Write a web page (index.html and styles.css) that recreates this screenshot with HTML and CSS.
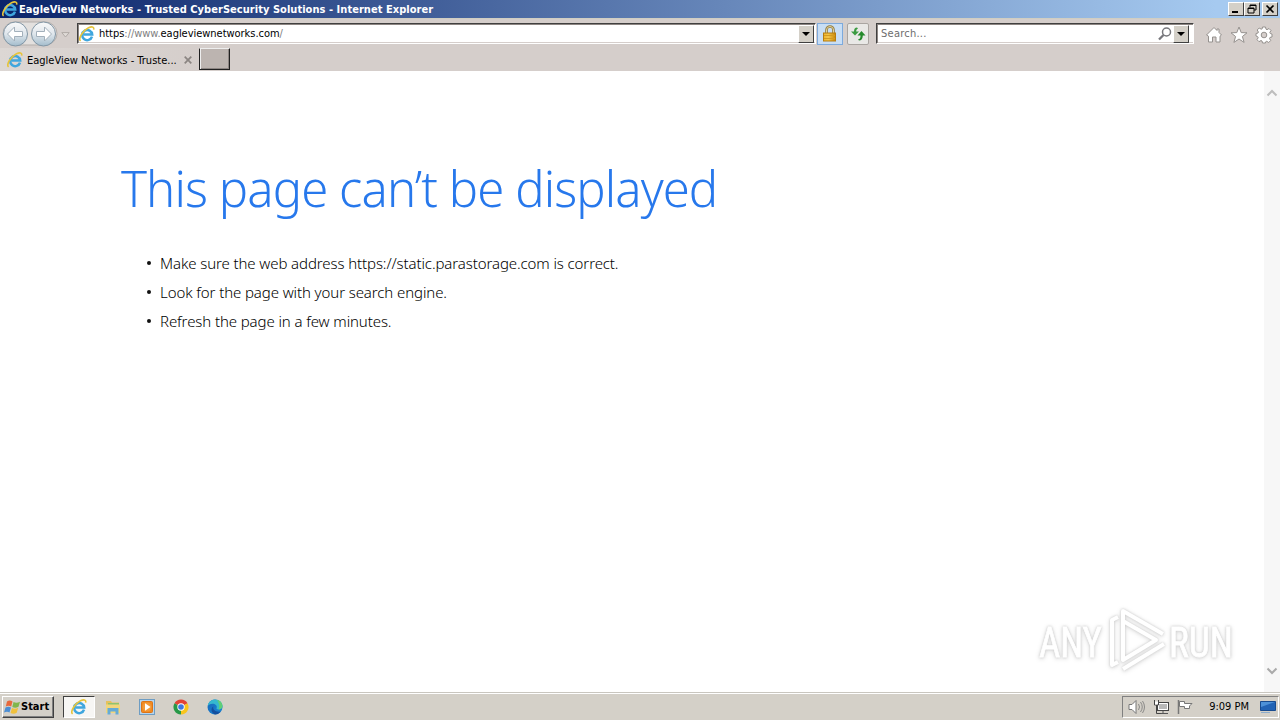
FILE: index.html
```
<!DOCTYPE html>
<html lang="en">
<head>
  <meta charset="UTF-8">
  <title>EagleView Networks - Trusted CyberSecurity Solutions</title>
  <link rel="stylesheet" href="styles.css">
</head>
<body>
  <svg width="0" height="0" class="defs">
    <defs>
      <linearGradient id="ring" x1="0" y1="0" x2="0" y2="1">
        <stop offset="0" stop-color="#fafafa"/>
        <stop offset="0.5" stop-color="#dfe6ec"/>
        <stop offset="1" stop-color="#a3bccc"/>
      </linearGradient>
      <linearGradient id="gold" x1="0" y1="0" x2="1" y2="0">
        <stop offset="0" stop-color="#efb52c"/>
        <stop offset="0.4" stop-color="#f4c64a"/>
        <stop offset="1" stop-color="#c98808"/>
      </linearGradient>
      <linearGradient id="edge" x1="0" y1="0" x2="1" y2="1">
        <stop offset="0" stop-color="#1565b8"/>
        <stop offset="1" stop-color="#1b87d6"/>
      </linearGradient>
      <symbol id="ie" viewBox="0 0 16 16">
        <path d="M13 10.6A5 5 0 1 1 13.2 8.6H4.6" fill="none" stroke="#3fa6de" stroke-width="2.5"/>
        <path d="M1.6 14.8C-1.2 12.6 4 4.5 9.5 1.8C12.4.3 15.4.4 14.6 3.6" fill="none" stroke="#e6c43c" stroke-width="1.6"/>
      </symbol>
    </defs>
  </svg>

  <div class="titlebar">
    <svg class="title-icon" width="16" height="16"><use href="#ie"/></svg>
    <span class="title">EagleView Networks - Trusted CyberSecurity Solutions - Internet Explorer</span>
    <div class="window-buttons">
      <svg class="win-btn" viewBox="0 0 14 12"><path d="M3 9h6" stroke="#000" stroke-width="2"/></svg>
      <svg class="win-btn" viewBox="0 0 14 12"><path d="M5 4.5V2h6v5H9M5 2.5h6M3 5h6v5H3zM3 5.5h6" fill="none" stroke="#000"/></svg>
      <svg class="win-btn close" viewBox="0 0 14 12"><path d="M3.5 2.5l7 7M10.5 2.5l-7 7" stroke="#000" stroke-width="1.7"/></svg>
    </div>
  </div>

  <div class="navbar">
    <svg class="arrows" width="58" height="28" viewBox="0 0 58 28">
      <rect x="3" y="2" width="54" height="23" rx="11.5" fill="#e3e0de" stroke="#b3aeab"/>
      <circle cx="15.5" cy="14" r="12" fill="url(#ring)" stroke="#8296a5"/>
      <circle cx="43.5" cy="14" r="12" fill="url(#ring)" stroke="#8296a5"/>
      <path d="M7.500 14l7-7v4.500h8v5h-8V21zM51.500 14l-7-7v4.500h-8v5h8V21z" fill="#fff" stroke="#a3b0bb"/>
    </svg>
    <svg class="history" width="9" height="6"><path d="M.8.6h7.400L4.500 5z" fill="#dfdbd7" stroke="#b0aaa6"/></svg>
    <div class="field address">
      <svg width="16" height="16"><use href="#ie"/></svg>
      <span class="url"><i>https</i>://www.<i>eagleviewnetworks.com</i>/</span>
      <svg class="drop" viewBox="0 0 14 16"><path d="M3 6h8L7 10z"/></svg>
    </div>
    <div class="lock">
      <svg width="14" height="18" viewBox="0 0 14 18">
        <path d="M3.5 9V5a3.500 3.500 0 0 1 7 0v4" fill="none" stroke="#8f7a42" stroke-width="2.600"/>
        <path d="M3.5 9V5a3.500 3.500 0 0 1 7 0v4" fill="none" stroke="#e3d49c"/>
        <rect x=".5" y="8" width="12" height="8" fill="url(#gold)" stroke="#b67d10"/>
        <path d="M1 10.500h11M1 13.500h11" stroke="#d39a22"/>
      </svg>
    </div>
    <div class="refresh">
      <svg width="16" height="16" viewBox="0 0 16 16">
        <path d="M7 1.500C5 1.500 4 3 4 5.500H1L5 9.500 9 5.500H6.200C6.200 3.500 7 3 8 2.500z" fill="#3b9b41"/>
        <path d="M9 14.500C11.500 14.500 12.800 12.500 12.800 9.500H15.500L11.500 5 7.500 9.500H10.500C10.500 12 10 13 8 13.500z" fill="#258a2c"/>
      </svg>
    </div>
    <div class="field search">
      <span>Search...</span>
      <svg class="glass" width="14" height="14" viewBox="0 0 14 14"><circle cx="8.500" cy="5" r="4" fill="none" stroke="#77777c" stroke-width="1.500"/><path d="M5.500 8L1 12.500" stroke="#77777c" stroke-width="2.300"/></svg>
      <svg class="drop" viewBox="0 0 14 16"><path d="M3 6h8L7 10z"/></svg>
    </div>
    <div class="tools">
      <svg width="18" height="18" viewBox="0 0 18 18"><path d="M1.500 9L9 1.500 12 4.500V3h2v3.500L16.500 9 15 10.200V16h-4v-5H7.500v5H3.500v-5.800z" fill="#fff" stroke="#95918e"/></svg>
      <svg width="18" height="18" viewBox="0 0 18 18"><path d="M9 1l2.200 5.600 5.800.2-4.600 3.700 1.700 5.900L9 13l-5.100 3.400 1.700-5.900L1 6.800l5.800-.2z" fill="#fff" stroke="#95918e"/></svg>
      <svg width="18" height="18" viewBox="0 0 18 18">
        <path d="M7.500 1h3l.5 2.200 1 .5 2-1.200 2 2-1.200 2 .5 1L17 8v3l-2 .4-.5 1.100 1.200 2-2 2-2-1.200-1 .5L10.500 17h-3l-.5-2-1-.5-2 1.200-2-2 1.200-2-.5-1L1 10V7.500l2-.5.4-1-1.200-2 2-2 2 1.200 1-.4z" fill="#fff" stroke="#95918e"/>
        <circle cx="9" cy="9" r="2.800" fill="#d5cecb" stroke="#95918e"/>
      </svg>
    </div>
  </div>

  <div class="tabbar">
    <div class="tab">
      <svg width="16" height="16"><use href="#ie"/></svg>
      <span class="tab-title">EagleView Networks - Truste...</span>
      <svg class="tab-close" width="8" height="8" viewBox="0 0 8 8"><path d="M.7.7l6.600 6.600M7.300.7L.7 7.300" stroke="#8b8582" stroke-width="1.700"/></svg>
    </div>
    <div class="new-tab"></div>
  </div>

  <div class="viewport">
    <main class="content">
      <h1>This page can’t be displayed</h1>
      <ul>
        <li><span>Make sure the web address https://static.parastorage.com is correct.</span></li>
        <li><span>Look for the page with your search engine.</span></li>
        <li><span>Refresh the page in a few minutes.</span></li>
      </ul>
    </main>
    <div class="scrollbar">
      <svg width="12" height="8" viewBox="0 0 12 8"><path d="M1.500 6.500L6 2l4.500 4.500" fill="none" stroke="#bdbdbd" stroke-width="2"/></svg>
      <svg width="12" height="8" viewBox="0 0 12 8"><path d="M1.500 1.500L6 6l4.500-4.500" fill="none" stroke="#aaa" stroke-width="2"/></svg>
    </div>
    <svg class="watermark" width="230" height="76" viewBox="0 0 230 76">
      <g fill="#fff" stroke="#fff" stroke-width=".8">
        <text x="8" y="54" textLength="63" lengthAdjust="spacingAndGlyphs">ANY</text>
        <text x="138" y="54" textLength="64" lengthAdjust="spacingAndGlyphs">RUN</text>
      </g>
      <g fill="none" stroke="#fff" stroke-width="4" stroke-linejoin="round">
        <path d="M92 48V8l40 23"/>
        <path d="M92 18l33 19-33 20V18"/>
        <path d="M87 14l-6 3v45l6-3"/>
        <path d="M92 66l41-25"/>
      </g>
    </svg>
  </div>

  <div class="taskbar">
    <div class="start">
      <svg width="17" height="16" viewBox="0 0 17 16">
        <path d="M3 2.500C5 1 7 1.500 8.500 2.500L7.200 7.500C5.500 6.500 3.500 6.500 1.800 7.500z" fill="#e8693c"/>
        <path d="M9.500 3c2 1 4 1 6.500-.3l-1.500 5c-2 1.200-4.300 1.200-6.200.2z" fill="#80b64c"/>
        <path d="M1.500 8.500c2-1.200 4-1 5.500 0L5.500 13.500C4 12.400 2 12.400 0 13.500z" fill="#4c8ed4"/>
        <path d="M8 9c2 1 4 1 6.200-.2l-1.500 5c-2 1.200-4.200 1.200-6.200.1z" fill="#f0c13c"/>
      </svg>
      <span>Start</span>
    </div>
    <div class="task active"><svg width="16" height="16"><use href="#ie"/></svg></div>
    <div class="task">
      <svg width="16" height="16" viewBox="0 0 16 16">
        <path d="M1 2h5l1 1.500h7V13H1z" fill="#e6c15c"/>
        <path d="M3 4h11v3H3z" fill="#8fc36e"/>
        <path d="M1 5.500h14V14H1z" fill="#f2d67c"/>
        <path d="M2.500 15.500V9h11v6.500h-3v-3h-5v3z" fill="#65abd6"/>
      </svg>
    </div>
    <div class="task">
      <svg width="16" height="16" viewBox="0 0 16 16">
        <rect x=".5" y=".5" width="15" height="15" fill="#b6d5ee" stroke="#6e9dc3"/>
        <rect x="2.500" y="2.500" width="11" height="11" rx="1" fill="#f08a21" stroke="#dc7418"/>
        <circle cx="8" cy="8" r="4.500" fill="#f29a39"/>
        <path d="M6 4.200l5.500 3.800L6 11.800z" fill="#fff"/>
      </svg>
    </div>
    <div class="task">
      <svg width="16" height="16" viewBox="0 0 16 16">
        <path d="M8 8L1.500 4.250A7.500 7.500 0 0 1 14.500 4.250z" fill="#e24335"/>
        <path d="M8 8L14.500 4.250A7.500 7.500 0 0 1 8 15.500z" fill="#f8c51c"/>
        <path d="M8 8v7.500A7.500 7.500 0 0 1 1.500 4.250z" fill="#279847"/>
        <circle cx="8" cy="8" r="3.700" fill="#fff"/>
        <circle cx="8" cy="8" r="2.800" fill="#3d78e0"/>
      </svg>
    </div>
    <div class="task">
      <svg width="16" height="16" viewBox="0 0 16 16">
        <circle cx="8" cy="8" r="7.500" fill="url(#edge)"/>
        <path d="M.7 7C1.500 2.800 4.500.5 8 .5c4.500 0 7.500 3.300 7.500 6.500 0 2.300-1.700 3.500-4 3.500-1.500 0-2.500-.6-1.800-1.700C10.500 6.500 8 4.700 5.500 4.700 3.200 4.700 1.500 5.700.7 7z" fill="#35b8cf"/>
        <path d="M10 .8c3.200.8 5.500 3.400 5.500 6.200 0 2.300-1.700 3.500-4 3.500 1.500-3 .8-6-1.500-9.700z" fill="#60cf77"/>
        <path d="M6.300 7.500c-.8 3 2 5.800 7.500 5A7.500 7.500 0 0 1 8 15.500C4 14 3.500 9 6.300 7.500z" fill="#144f9e"/>
      </svg>
    </div>
    <div class="tray">
      <svg width="17" height="16" viewBox="0 0 17 16"><path d="M1 5.500h3l4-4v13l-4-4H1z" fill="#fff" stroke="#777"/><path d="M10.500 5q2 3 0 6M12.500 3q3.500 5 0 10M14.500 2q4 6 0 12" fill="none" stroke="#777" stroke-width=".8"/></svg>
      <svg width="16" height="16" viewBox="0 0 16 16"><rect x="4.500" y="3.500" width="11" height="8" fill="#b8b8b8" stroke="#444"/><path d="M5.500 4.500h9v6h-9z" fill="none" stroke="#fff"/><path d="M7 14.500h8M10 12v2" stroke="#555"/><path d="M1.500 1v5h4V1M3.500 6v8.500h4" fill="none" stroke="#444"/><path d="M2 2.500h3v3H2z" fill="#fff"/></svg>
      <svg width="17" height="16" viewBox="0 0 17 16"><path d="M1.500 1v14" stroke="#777" stroke-width="1.500"/><path d="M2.500 2.500h5v2h7.500l-2.500 2.500v2.500H7.500v-2h-5z" fill="#fff" stroke="#777"/></svg>
      <span class="clock">9:09 PM</span>
      <svg width="16" height="14" viewBox="0 0 16 14"><path d="M.5 1.500h15v9H.5z" fill="#2263b5" stroke="#184b8f"/><path d="M1 2h14L1 7z" fill="#4d91d8"/><path d="M1 12.500h9" stroke="#8daccb"/></svg>
    </div>
  </div>
</body>
</html>
```

FILE: styles.css
```
* {
  box-sizing: border-box;
}
body {
  margin: 0;
  width: 1280px;
  height: 720px;
  overflow: hidden;
  display: flex;
  flex-direction: column;
  background: #fff;
  font-family: "DejaVu Sans Condensed", "DejaVu Sans", sans-serif;
  font-stretch: condensed;
  font-size: 11px;
  color: #000;
}
svg {
  display: block;
  flex: none;
}
span {
  white-space: nowrap;
}
.defs {
  position: absolute;
}
.titlebar {
  height: 18px;
  flex: none;
  display: flex;
  align-items: center;
  padding: 0 2px;
  background: linear-gradient(to right, #0a246a, #a6caf0 95%);
}
.title {
  margin-left: 1px;
  color: #fff;
  font-weight: bold;
  letter-spacing: 0.04px;
}
.window-buttons {
  margin-left: auto;
  display: flex;
}
.win-btn {
  width: 16px;
  height: 14px;
  background: #d4d0c8;
  border: 1px solid;
  border-color: #fff #404040 #404040 #fff;
}
.win-btn.close {
  margin-left: 2px;
}
.navbar {
  height: 30px;
  flex: none;
  display: flex;
  align-items: center;
  background: #d5cecb;
  border-top: 1px solid #d0cec2;
}
.history {
  margin: 2px 8px 0 3px;
}
.field {
  height: 21px;
  display: flex;
  align-items: center;
  background: #fff;
  border: 1px solid;
  border-color: #404040 #fff #fff #404040;
  box-shadow: inset 1px 1px #8c8582, inset 0 -1px #d5cecb;
}
.address {
  width: 739px;
  margin-left: -1px;
  padding: 0 1px;
}
.url {
  margin-left: 4px;
  color: #808080;
  letter-spacing: -0.03px;
}
.url i {
  font-style: normal;
  color: #000;
}
.drop {
  width: 16px;
  height: 18px;
  margin-left: auto;
  background: #d4d0c8;
  border: 1px solid;
  border-color: #fff #404040 #404040 #fff;
}
.lock {
  width: 26px;
  height: 22px;
  margin-left: 1px;
  display: flex;
  align-items: center;
  justify-content: center;
  background: #c8def5;
  border: 1px solid #7daadd;
}
.refresh {
  width: 22px;
  height: 22px;
  margin-left: 4px;
  display: flex;
  align-items: center;
  justify-content: center;
  background: #e9e8e6;
  border: 1px solid #aaa5a1;
  border-radius: 2px;
}
.search {
  width: 318px;
  margin-left: 7px;
  padding: 0 4px;
  color: #6d6d6d;
}
.search span {
  letter-spacing: 0.25px;
}
.search .glass {
  margin-left: auto;
}
.search .drop {
  margin-left: 1px;
}
.tools {
  display: flex;
  gap: 7px;
  margin: 3px 0 0 11px;
}
.tabbar {
  height: 23px;
  flex: none;
  display: flex;
  background: #d5cecb;
}
.tab {
  width: 199px;
  display: flex;
  align-items: center;
  padding: 1px 0 0 7px;
  background: linear-gradient(to right, #dcd7d4, #d5cecb);
}
.tab-title {
  margin-left: 4px;
  width: 151px;
}
.tab-close {
  margin-left: 6px;
}
.new-tab {
  width: 31px;
  height: 22px;
  background: #bcb4b0;
  border: 1px solid #202020;
  border-top-color: #eee;
  box-shadow: inset 1px 0 #eee, inset -1px -1px #8c8582;
}
.viewport {
  height: 621px;
  flex: none;
  display: flex;
  position: relative;
}
.content {
  flex: 1;
  padding: 83px 0 0 121px;
  font-family: "Noto Sans", "Open Sans", sans-serif;
  font-stretch: normal;
  font-weight: 300;
}
h1 {
  margin: 0;
  font-size: 49px;
  font-weight: 300;
  line-height: 68px;
  letter-spacing: -0.9px;
  color: #2778ec;
  white-space: nowrap;
}
ul {
  margin: 26px 0 0;
  padding: 0 0 0 25px;
  list-style: none;
}
li {
  height: 29px;
  display: flex;
  align-items: center;
  font-size: 15px;
  letter-spacing: -0.1px;
}
li::before {
  content: "";
  width: 4px;
  height: 4px;
  margin: 1px 9px 0 1px;
  border-radius: 2px;
  background: #111;
}
.scrollbar {
  width: 16px;
  display: flex;
  flex-direction: column;
  justify-content: space-between;
  align-items: center;
  padding: 18px 0 17px;
  background: #f7f7f7;
}
.watermark {
  position: absolute;
  left: 1031px;
  top: 532px;
  overflow: visible;
  font-family: Roboto, sans-serif;
  font-size: 43px;
  filter: drop-shadow(0 0 1px #ccc) drop-shadow(0 1px 2px #ddd);
}
.taskbar {
  height: 28px;
  flex: none;
  display: flex;
  align-items: center;
  padding-left: 2px;
  background: #d4d0c8;
  border-top: 1px solid #c9c6bf;
  box-shadow: inset 0 1px #fff;
}
.start {
  width: 52px;
  height: 22px;
  margin-right: 9px;
  padding-left: 1px;
  display: flex;
  align-items: center;
  font-weight: bold;
  border: 1px solid;
  border-color: #fff #404040 #404040 #fff;
  box-shadow: inset -1px -1px #808080;
}
.task {
  width: 32px;
  height: 22px;
  margin-right: 2px;
  display: flex;
  align-items: center;
  justify-content: center;
}
.task.active {
  background: #f7f6f4;
  border: 1px solid;
  border-color: #404040 #fff #fff #404040;
}
.tray {
  width: 157px;
  height: 22px;
  margin: 0 1px 0 auto;
  padding: 0 2px 0 5px;
  display: flex;
  align-items: center;
  gap: 8px;
  border: 1px solid;
  border-color: #808080 #fff #fff #808080;
}
.clock {
  margin: 0 3px 0 auto;
}
```
